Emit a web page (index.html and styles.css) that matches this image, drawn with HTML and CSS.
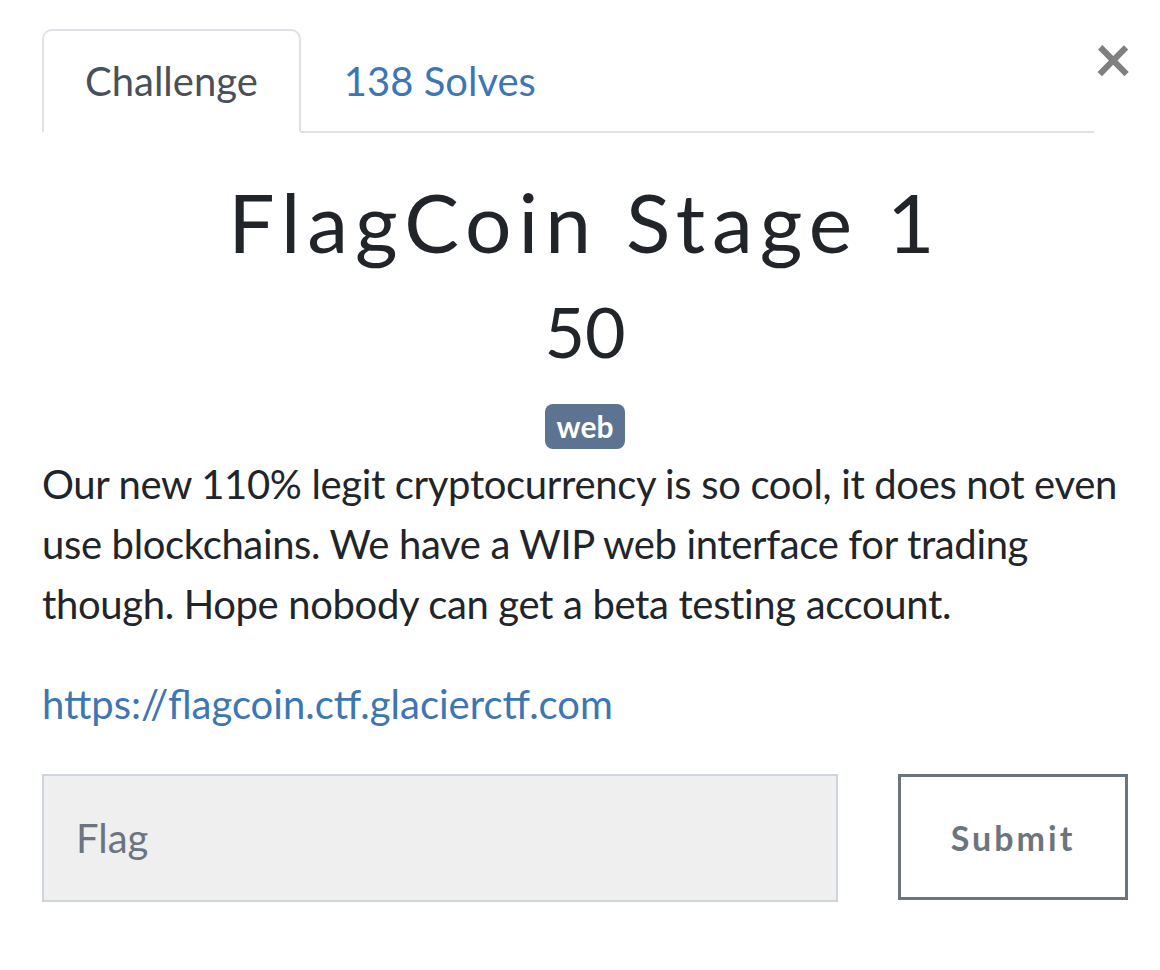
FILE: index.html
```html
<!DOCTYPE html>
<html lang="en">
<head>
<meta charset="utf-8">
<title>FlagCoin Stage 1</title>
<link rel="stylesheet" href="styles.css">
</head>
<body>
<div class="modal">
  <div class="header">
    <ul class="tabs">
      <li class="tab active">Challenge</li>
      <li class="tab">138 Solves</li>
    </ul>
    <button class="close" type="button">&times;</button>
  </div>
  <h2 class="name">FlagCoin Stage 1</h2>
  <h3 class="value">50</h3>
  <div class="tags"><span class="badge">web</span></div>
  <p class="desc">Our new 110% legit cryptocurrency is so cool, it does not even use blockchains. We have a WIP web interface for trading though. Hope nobody can get a beta testing account.</p>
  <p class="link"><a href="#">https://flagcoin.ctf.glacierctf.com</a></p>
  <div class="submit-row">
    <input class="flag" type="text" placeholder="Flag">
    <button class="submit" type="button">Submit</button>
  </div>
</div>
</body>
</html>
```

FILE: styles.css
```css
* { box-sizing: border-box; }
html, body { margin: 0; padding: 0; background: #fff; }
body {
  font-family: "Lato", "Liberation Sans", sans-serif;
  color: #212529;
  font-size: 40px;
  line-height: 1.5;
}
.modal {
  padding: 29px 32px 0 42px;
}
.header {
  display: flex;
  align-items: flex-start;
}
.tabs {
  flex: 1;
  display: flex;
  list-style: none;
  margin: 0;
  padding: 0;
  border-bottom: 2px solid #dee2e6;
}
.tab {
  padding: 20px 41px;
  margin-bottom: -2px;
  border: 2px solid transparent;
  border-radius: 10px 10px 0 0;
  color: #3c76b5;
  line-height: 60px;
}
.tab.active {
  color: #495057;
  border-color: #dee2e6 #dee2e6 #fff;
  background: #fff;
}
.close {
  width: 34px;
  margin: -4px 0 0 0;
  padding: 0;
  background: none;
  border: 0;
  font-family: "Lato", "Liberation Sans", sans-serif;
  font-size: 66px;
  font-weight: 700;
  line-height: 1;
  color: #808080;
  text-align: right;
}
.name {
  margin: 40px 0 0;
  text-align: center;
  font-family: "Lato", "Liberation Sans", sans-serif;
  font-weight: 400;
  font-size: 82px;
  letter-spacing: 7px;
  line-height: 96px;
  color: #212529;
}
.value {
  margin: 20px 0 0;
  text-align: center;
  font-weight: 400;
  font-size: 70px;
  line-height: 84px;
}
.tags {
  text-align: center;
  margin-top: 30px;
  line-height: 1;
}
.badge {
  display: inline-block;
  background: #5d7392;
  color: #fff;
  font-weight: 700;
  font-size: 30px;
  line-height: 1;
  padding: 7px 12px 8px;
  border-radius: 8px;
}
.desc {
  margin: 5px 0 0;
  letter-spacing: -0.35px;
}
.link {
  margin: 40px 0 0;
}
.link a {
  color: #3d76b3;
  text-decoration: none;
}
.submit-row {
  display: flex;
  align-items: flex-start;
  margin-top: 40px;
  gap: 60px;
}
.flag {
  width: 796px;
  height: 128px;
  background: #efefef;
  border: 2px solid #cfd5dc;
  padding: 0 32px;
  font-family: "Lato", "Liberation Sans", sans-serif;
  font-size: 40px;
  color: #495057;
}
.flag::placeholder { color: #6c757d; }
.submit {
  flex: 1;
  height: 126px;
  background: #fff;
  border: 3px solid #6c757d;
  font-family: "Lato", "Liberation Sans", sans-serif;
  font-size: 34px;
  font-weight: 700;
  letter-spacing: 3px;
  color: #6c757d;
}
```
